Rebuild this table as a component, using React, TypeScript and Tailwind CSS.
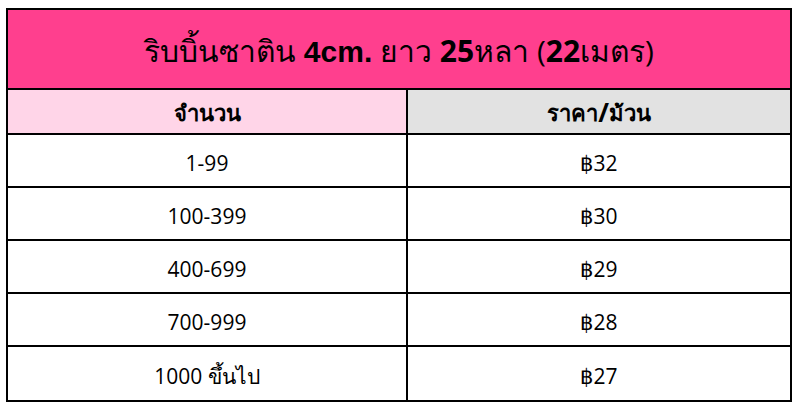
import React from "react";

const rows = [
  { qty: "1-99", price: "฿32" },
  { qty: "100-399", price: "฿30" },
  { qty: "400-699", price: "฿29" },
  { qty: "700-999", price: "฿28" },
  { qty: "1000 ขึ้นไป", price: "฿27" },
];

export default function App() {
  return (
    <div className="h-[408px] w-[799px] bg-white pl-[6px] pt-[8px] font-['Open_Sans','Noto_Sans',sans-serif] text-black">
      <div className="flex w-[786px] flex-col border-2 border-black">
        <div className="flex h-[80px] items-center justify-center border-b-2 border-black bg-[#ff3f8e] pt-[4px] text-[30px]">
          <span>
            ริบบิ้นซาติน <b className="font-['Liberation_Sans',sans-serif]">4cm.</b> ยาว <b>25</b>หลา (<b>22</b>เมตร)
          </span>
        </div>
        <div className="flex h-[45px] border-b-2 border-black text-[22px] font-bold">
          <div className="flex w-[400px] items-center justify-center border-r-2 border-black bg-[#ffd5e8] pt-[2px]">
            จำนวน
          </div>
          <div className="flex flex-1 items-center justify-center bg-[#e2e2e2] pt-[2px]">
            ราคา<span className="text-[26px]">/</span>ม้วน
          </div>
        </div>
        {rows.map((r, i) => (
          <div
            key={r.qty}
            className={`flex h-[53px] text-[21px] ${i < rows.length - 1 ? "border-b-2 border-black" : ""}`}
          >
            <div className="flex w-[400px] items-center justify-center border-r-2 border-black pt-[6px]">
              {r.qty}
            </div>
            <div className="flex flex-1 items-center justify-center pt-[6px]">{r.price}</div>
          </div>
        ))}
      </div>
    </div>
  );
}
